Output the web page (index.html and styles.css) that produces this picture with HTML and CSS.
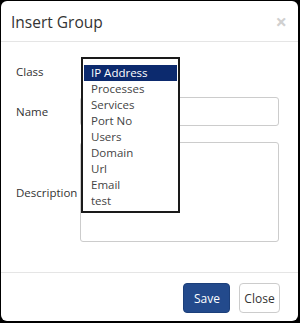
FILE: index.html
```html
<!DOCTYPE html>
<html>
<head>
<meta charset="utf-8">
<link rel="stylesheet" href="styles.css">
</head>
<body>
<div class="modal">
  <div class="modal-header">
    <h4 class="modal-title">Insert Group</h4>
    <span class="close">&times;</span>
  </div>
  <div class="modal-body">
    <div class="row row-class">
      <label class="label">Class</label>
      <div class="control">
        <ul class="listbox">
          <li class="item selected">IP Address</li>
          <li class="item">Processes</li>
          <li class="item">Services</li>
          <li class="item">Port No</li>
          <li class="item">Users</li>
          <li class="item">Domain</li>
          <li class="item">Url</li>
          <li class="item">Email</li>
          <li class="item">test</li>
        </ul>
      </div>
    </div>
    <div class="row row-name">
      <label class="label">Name</label>
      <div class="control"><div class="input"></div></div>
    </div>
    <div class="row row-desc">
      <label class="label">Description</label>
      <div class="control"><div class="textarea"></div></div>
    </div>
  </div>
  <div class="modal-footer">
    <button class="btn btn-primary">Save</button>
    <button class="btn btn-default">Close</button>
  </div>
</div>
</body>
</html>
```
FILE: styles.css
```css
* { box-sizing: border-box; }
html, body { margin: 0; padding: 0; }
body {
  background: #000;
  width: 300px;
  height: 323px;
  font-family: "Open Sans", "Segoe UI", sans-serif;
  font-size: 11.5px;
  color: #333;
  padding: 1px 2px 2px 1px;
}
.modal {
  background: #fff;
  border-radius: 6px;
  height: 320px;
  display: flex;
  flex-direction: column;
}
.modal-header {
  height: 41px;
  border-bottom: 1px solid #e5e5e5;
  display: flex;
  align-items: center;
  justify-content: space-between;
  padding: 2px 11px 0 10px;
}
.modal-title {
  margin: 0;
  font-weight: 400;
  font-size: 15.5px;
  color: #333;
}
.close {
  font-size: 20px;
  color: #d0d0d0;
  font-weight: 700;
  line-height: 1;
  margin-top: 0;
}
.modal-body {
  flex: 1;
  padding: 15px 19px 0 15px;
}
.row {
  display: grid;
  grid-template-columns: 64px 1fr;
  align-items: center;
}
.row-class { height: 29px; }
.row-name { margin-top: 11px; }
.row-desc { margin-top: 16px; }
.label { color: #333; }
.control { position: relative; height: 100%; }
.input {
  height: 29px;
  border: 1px solid #ccc;
  border-radius: 3px;
}
.textarea {
  height: 100px;
  border: 1px solid #ccc;
  border-radius: 3px;
}
.listbox {
  position: absolute;
  top: 0;
  left: 1px;
  width: 99px;
  margin: 0;
  padding: 6px 1px 2px 1px;
  list-style: none;
  background: #fff;
  border: 2px solid #1a1a1a;
  z-index: 2;
}
.item {
  height: 16px;
  line-height: 16px;
  padding-left: 7px;
  color: #444;
  white-space: nowrap;
}
.item.selected {
  background: #0c2a6e;
  color: #fff;
}
.modal-footer {
  height: 49px;
  border-top: 1px solid #e5e5e5;
  display: flex;
  justify-content: flex-end;
  align-items: flex-start;
  gap: 9px;
  padding: 10px 18px 0 0;
}
.btn {
  height: 30px;
  border-radius: 4px;
  font-family: inherit;
  font-size: 12px;
  padding: 0 10px;
  cursor: pointer;
}
.btn-primary {
  background: #234a8c;
  border: 1px solid #1c3f7a;
  color: #fff;
  width: 47px;
}
.btn-default {
  background: #fff;
  border: 1px solid #ccc;
  color: #333;
  width: 41px;
  padding: 0;
}
```
